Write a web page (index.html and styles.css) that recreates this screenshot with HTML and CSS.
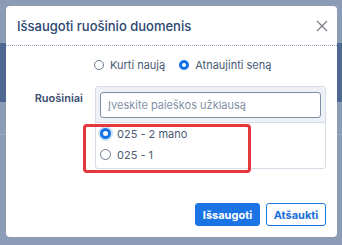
FILE: index.html
```html
<!DOCTYPE html>
<html lang="lt">
<head>
    <meta charset="UTF-8">
    <meta name="viewport" content="width=device-width, initial-scale=1.0">
    <title>Išsaugoti ruošinio duomenis</title>
    <link rel="stylesheet" href="styles.css">
</head>
<body>
    <div class="modal">
        <div class="modal-header">
            <h2 class="modal-title">Išsaugoti ruošinio duomenis</h2>
            <span class="close">
                <svg width="12" height="12" viewBox="0 0 12 12">
                    <path d="M1 1L11 11M11 1L1 11" stroke="#7b7f86" stroke-width="1.3" fill="none"/>
                </svg>
            </span>
        </div>

        <div class="modal-body">
            <div class="mode-row">
                <label class="choice"><span class="radio"></span>Kurti naują</label>
                <label class="choice"><span class="radio checked"></span>Atnaujinti seną</label>
            </div>

            <div class="field">
                <span class="field-label">Ruošiniai</span>
                <div class="picker">
                    <div class="picker-search">
                        <input type="text" class="search" placeholder="Įveskite paieškos užklausą">
                    </div>
                    <div class="picker-list">
                        <label class="item"><span class="radio checked focus"></span>025 - 2 mano</label>
                        <label class="item"><span class="radio"></span>025 - 1</label>
                    </div>
                    <div class="mark"></div>
                </div>
            </div>
        </div>

        <div class="modal-footer">
            <button class="btn btn-primary">Išsaugoti</button>
            <button class="btn btn-outline">Atšaukti</button>
        </div>
    </div>
</body>
</html>
```

FILE: styles.css
```css
html{
    font-family: Inter, "Noto Sans", sans-serif;
}

body{
    margin: 0;
    height: 245px;
    padding: 6px 5px 0 6px;
    box-sizing: border-box;
    background: linear-gradient(to bottom,
        #8c9cb6 0, #8c9cb6 43px,
        #4e6892 43px, #4e6892 102px,
        #8c9cb6 102px, #8c9cb6 134px,
        #9aabc3 134px, #9aabc3 135px,
        #8c9cb6 135px);
}

.modal{
    width: 331px;
    height: 231px;
    background: #fff;
    border-radius: 4px;
    display: flex;
    flex-direction: column;
    box-sizing: border-box;
}

.modal-header{
    height: 40px;
    box-sizing: border-box;
    border-bottom: 1px dotted #8fa3c0;
    display: flex;
    align-items: center;
    justify-content: space-between;
    padding: 0 9px 0 11px;
}

.modal-title{
    margin: 0;
    font-size: 13px;
    font-weight: 500;
    color: #2b4670;
}

.close{
    display: flex;
    margin-top: 1px;
}

.modal-body{
    padding: 12px 11px 0 0;
}

.mode-row{
    display: flex;
    gap: 14px;
    padding-left: 88px;
    height: 14px;
    align-items: center;
}

.choice, .item{
    display: flex;
    align-items: center;
    font-size: 11px;
    color: #4a5a74;
}

.radio{
    width: 10px;
    height: 10px;
    border: 1px solid #6c7a8f;
    border-radius: 50%;
    box-sizing: border-box;
    margin-right: 6px;
    background: #fff;
}

.radio.checked{
    border: 3px solid #1473e6;
    background: #fff;
}

.radio.focus{
    box-shadow: 0 0 0 2px #cfe1f8;
}

.field{
    display: flex;
    margin-top: 14px;
}

.field-label{
    width: 77px;
    text-align: right;
    padding-top: 5px;
    font-size: 11px;
    font-weight: 600;
    color: #3b4f6e;
}

.picker{
    position: relative;
    margin-left: 12px;
    flex: 1;
    border: 1px solid #d6dde8;
    border-radius: 3px;
    height: 83px;
    box-sizing: border-box;
}

.picker-search{
    background: #eef1f6;
    padding: 5px 4px 4px 4px;
    border-bottom: 1px solid #d6dde8;
}

.search{
    width: 100%;
    height: 26px;
    box-sizing: border-box;
    border: 1px solid #7d8ea8;
    border-radius: 3px;
    padding: 0 7px;
    font-family: inherit;
    font-size: 11px;
    background: #fff;
}

.search::placeholder{
    color: #8391a6;
}

.picker-list{
    padding: 0 4px;
}

.item{
    height: 21px;
}

.item .radio{
    width: 11px;
    height: 11px;
}

.mark{
    position: absolute;
    left: -13px;
    top: 37px;
    width: 168px;
    height: 49px;
    border: 3px solid #e6373c;
    border-radius: 4px;
    box-sizing: border-box;
}

.modal-footer{
    margin-top: auto;
    display: flex;
    justify-content: flex-end;
    gap: 6px;
    padding: 0 11px 11px 0;
}

.btn{
    height: 23px;
    border-radius: 3px;
    font-family: inherit;
    font-size: 11px;
    font-weight: 700;
    padding: 0;
}

.btn-primary{
    width: 65px;
    background: #1a74e4;
    border: 1px solid #1a74e4;
    color: #fff;
}

.btn-outline{
    width: 60px;
    background: #fff;
    border: 1px solid #1a74e4;
    color: #1a6fd8;
}
```
